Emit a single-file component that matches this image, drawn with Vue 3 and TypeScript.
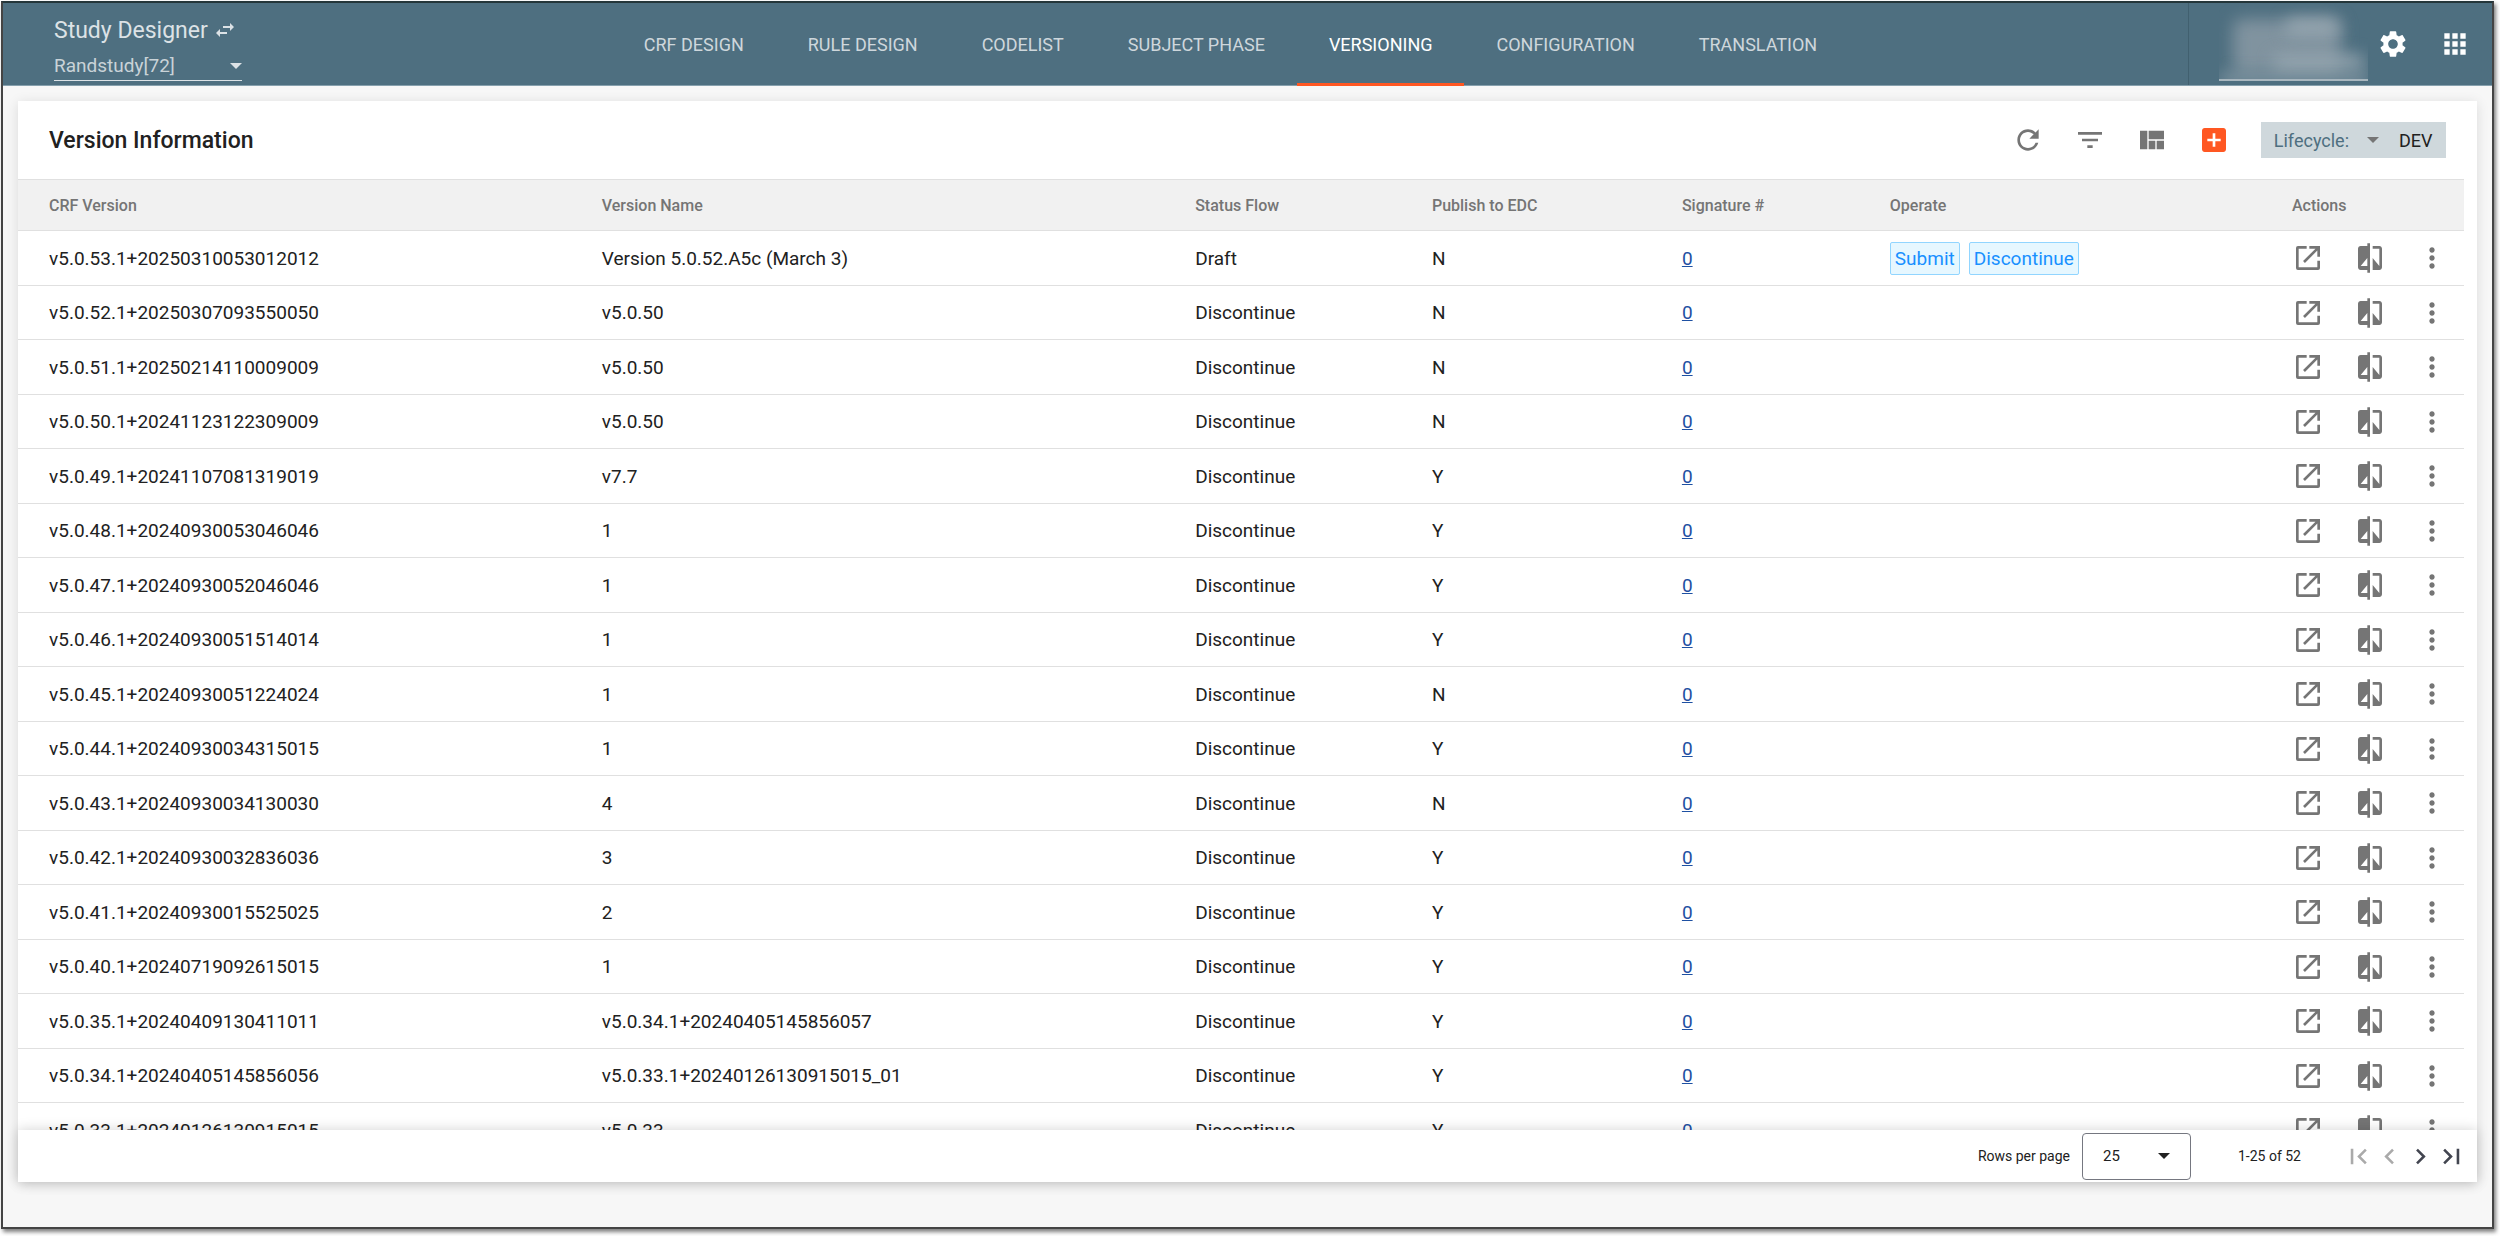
<script setup lang="ts">
import { ref } from 'vue'

interface VersionRow {
  version: string
  name: string
  status: string
  published: 'Y' | 'N'
  signatures: number
}

const tabs: string[] = [
  'CRF DESIGN',
  'RULE DESIGN',
  'CODELIST',
  'SUBJECT PHASE',
  'VERSIONING',
  'CONFIGURATION',
  'TRANSLATION',
]
const activeTab = ref('VERSIONING')

const source: [string, string, 'Y' | 'N'][] = [
  ['v5.0.53.1+20250310053012012', 'Version 5.0.52.A5c (March 3)', 'N'],
  ['v5.0.52.1+20250307093550050', 'v5.0.50', 'N'],
  ['v5.0.51.1+20250214110009009', 'v5.0.50', 'N'],
  ['v5.0.50.1+20241123122309009', 'v5.0.50', 'N'],
  ['v5.0.49.1+20241107081319019', 'v7.7', 'Y'],
  ['v5.0.48.1+20240930053046046', '1', 'Y'],
  ['v5.0.47.1+20240930052046046', '1', 'Y'],
  ['v5.0.46.1+20240930051514014', '1', 'Y'],
  ['v5.0.45.1+20240930051224024', '1', 'N'],
  ['v5.0.44.1+20240930034315015', '1', 'Y'],
  ['v5.0.43.1+20240930034130030', '4', 'N'],
  ['v5.0.42.1+20240930032836036', '3', 'Y'],
  ['v5.0.41.1+20240930015525025', '2', 'Y'],
  ['v5.0.40.1+20240719092615015', '1', 'Y'],
  ['v5.0.35.1+20240409130411011', 'v5.0.34.1+20240405145856057', 'Y'],
  ['v5.0.34.1+20240405145856056', 'v5.0.33.1+20240126130915015_01', 'Y'],
  ['v5.0.33.1+20240126130915015', 'v5.0.33', 'Y'],
]

const rows: VersionRow[] = source.map(([version, name, published], index) => ({
  version,
  name,
  published,
  status: index === 0 ? 'Draft' : 'Discontinue',
  signatures: 0,
}))
</script>

<template>
  <div class="frame">
    <header class="topbar">
      <div class="brand">
        <div class="brand-name">
          <span>Study Designer</span>
          <svg class="swap" viewBox="3 5 18 14" aria-hidden="true">
            <path d="M6.990 11 3 15l3.990 4v-3H14v-2H6.990v-3zM21 9l-3.990-4v3H10v2h7.010v3L21 9z" />
          </svg>
        </div>
        <div class="study">
          <select class="study-select" aria-label="Study">
            <option>Randstudy[72]</option>
          </select>
          <svg class="caret" viewBox="0 0 12 6" aria-hidden="true"><path d="M0 0h12L6 6z" /></svg>
        </div>
      </div>
      <nav class="tabs">
        <a
          v-for="tab in tabs"
          :key="tab"
          href="#"
          class="tab"
          :class="{ active: tab === activeTab }"
          @click.prevent="activeTab = tab"
          >{{ tab }}</a
        >
      </nav>
      <div class="account">
        <div class="user">
          <i class="smudge base"></i><i class="smudge one"></i><i class="smudge two"></i><i class="smudge three"></i>
        </div>
        <button class="bar-button" aria-label="Settings">
          <svg viewBox="0 0 24 24">
            <path
              d="M19.14 12.94c.04-.3.06-.61.06-.94 0-.32-.02-.64-.07-.94l2.03-1.58c.18-.14.23-.41.12-.61l-1.92-3.32c-.12-.22-.37-.29-.59-.22l-2.39.96c-.5-.38-1.03-.7-1.62-.94l-.36-2.54c-.04-.24-.24-.41-.48-.41h-3.84c-.24 0-.43.17-.47.41l-.36 2.54c-.59.24-1.13.57-1.62.94l-2.39-.96c-.22-.08-.47 0-.59.22L2.74 8.87c-.12.21-.08.47.12.61l2.03 1.58c-.05.3-.09.63-.09.94s.02.64.07.94l-2.03 1.58c-.18.14-.23.41-.12.61l1.92 3.32c.12.22.37.29.59.22l2.39-.96c.5.38 1.03.7 1.62.94l.36 2.54c.05.24.24.41.48.41h3.84c.24 0 .44-.17.47-.41l.36-2.54c.59-.24 1.13-.56 1.62-.94l2.39.96c.22.08.47 0 .59-.22l1.92-3.32c.12-.22.07-.47-.12-.61l-2.01-1.58zM12 15.6c-1.98 0-3.6-1.62-3.6-3.6s1.62-3.6 3.6-3.6 3.6 1.62 3.6 3.6-1.62 3.6-3.6 3.6z"
            />
          </svg>
        </button>
        <button class="bar-button" aria-label="Apps">
          <svg viewBox="0 0 24 24">
            <path
              d="M4 8h4V4H4v4zm6 12h4v-4h-4v4zm-6 0h4v-4H4v4zm0-6h4v-4H4v4zm6 0h4v-4h-4v4zm6-10v4h4V4h-4zm-6 4h4V4h-4v4zm6 6h4v-4h-4v4zm0 6h4v-4h-4v4z"
            />
          </svg>
        </button>
      </div>
    </header>

    <main class="content">
      <section class="card">
        <div class="card-head">
          <h1>Version Information</h1>
          <div class="tools">
            <button class="icon-button" aria-label="Refresh">
              <svg viewBox="0 0 24 24">
                <path
                  d="M17.65 6.35C16.2 4.9 14.21 4 12 4c-4.42 0-7.99 3.58-7.99 8s3.57 8 7.99 8c3.73 0 6.84-2.55 7.73-6h-2.08c-.82 2.33-3.04 4-5.65 4-3.31 0-6-2.69-6-6s2.69-6 6-6c1.66 0 3.14.69 4.22 1.78L13 11h7V4l-2.35 2.35z"
                />
              </svg>
            </button>
            <button class="icon-button" aria-label="Filter">
              <svg viewBox="0 0 24 24"><path d="M10 18h4v-2h-4v2zM3 6v2h18V6H3zm3 7h12v-2H6v2z" /></svg>
            </button>
            <button class="icon-button" aria-label="Columns">
              <svg viewBox="0 0 24 24">
                <path d="M3 5v14h5.500V5zM9.500 5v6.500H21V5zM9.500 12.500V19h5v-6.500zM15.500 12.500V19H21v-6.500z" />
              </svg>
            </button>
            <button class="icon-button add" aria-label="Add version">
              <svg viewBox="0 0 24 24">
                <path
                  d="M19 3H5c-1.110 0-2 .9-2 2v14c0 1.100.89 2 2 2h14c1.100 0 2-.9 2-2V5c0-1.100-.9-2-2-2zm-2 10h-4v4h-2v-4H7v-2h4V7h2v4h4v2z"
                />
              </svg>
            </button>
            <div class="lifecycle">
              <label for="lifecycle">Lifecycle:</label>
              <svg class="caret" viewBox="0 0 12 6" aria-hidden="true"><path d="M0 0h12L6 6z" /></svg>
              <select id="lifecycle">
                <option>DEV</option>
              </select>
            </div>
          </div>
        </div>

        <div class="table-scroll">
          <table>
            <colgroup>
              <col class="c-version" />
              <col class="c-name" />
              <col class="c-status" />
              <col class="c-publish" />
              <col class="c-sign" />
              <col class="c-operate" />
              <col class="c-actions" />
            </colgroup>
            <thead>
              <tr>
                <th>CRF Version</th>
                <th>Version Name</th>
                <th>Status Flow</th>
                <th>Publish to EDC</th>
                <th>Signature #</th>
                <th>Operate</th>
                <th>Actions</th>
              </tr>
            </thead>
            <tbody>
              <tr v-for="row in rows" :key="row.version">
                <td>{{ row.version }}</td>
                <td>{{ row.name }}</td>
                <td>{{ row.status }}</td>
                <td>{{ row.published }}</td>
                <td><a href="#" class="sign">{{ row.signatures }}</a></td>
                <td>
                  <div v-if="row.status === 'Draft'" class="operate">
                    <button class="chip">Submit</button>
                    <button class="chip">Discontinue</button>
                  </div>
                </td>
                <td>
                  <div class="actions">
                    <button class="icon-button" aria-label="Open">
                      <svg viewBox="0 0 24 24">
                        <path
                          d="M4.500 3H11v2H5v14h14v-5h2v5.500a1.500 1.500 0 0 1-1.500 1.500h-15A1.500 1.500 0 0 1 3 19.500v-15A1.500 1.500 0 0 1 4.500 3zM13 3h8v8h-2V6.400l-9.300 9.300-1.400-1.400L17.600 5H13z"
                        />
                      </svg>
                    </button>
                    <button class="icon-button" aria-label="Compare">
                      <svg viewBox="0 0 24 24">
                        <path
                          d="M10 3H5c-1.100 0-2 .9-2 2v14c0 1.100.9 2 2 2h5v2h2V1h-2v2zm0 15H5l5-6v6zm9-15h-5v2h5v13l-5-6v9h5c1.100 0 2-.9 2-2V5c0-1.100-.9-2-2-2z"
                        />
                      </svg>
                    </button>
                    <button class="icon-button" aria-label="More">
                      <svg viewBox="0 0 24 24">
                        <path
                          d="M12 8c1.100 0 2-.9 2-2s-.9-2-2-2-2 .9-2 2 .9 2 2 2zm0 2c-1.100 0-2 .9-2 2s.9 2 2 2 2-.9 2-2-.9-2-2-2zm0 6c-1.100 0-2 .9-2 2s.9 2 2 2 2-.9 2-2-.9-2-2-2z"
                        />
                      </svg>
                    </button>
                  </div>
                </td>
              </tr>
            </tbody>
          </table>
        </div>

        <footer class="pager">
          <label for="page-size">Rows per page</label>
          <div class="page-size">
            <select id="page-size">
              <option>25</option>
            </select>
            <svg class="caret" viewBox="0 0 12 6" aria-hidden="true"><path d="M0 0h12L6 6z" /></svg>
          </div>
          <span class="range">1-25 of 52</span>
          <div class="pages">
            <button disabled aria-label="First page">
              <svg viewBox="0 0 24 24"><path d="M18.410 16.590 13.820 12l4.590-4.590L17 6l-6 6 6 6zM6 6h2v12H6z" /></svg>
            </button>
            <button disabled aria-label="Previous page">
              <svg viewBox="0 0 24 24"><path d="M15.410 7.410 14 6l-6 6 6 6 1.410-1.410L10.830 12z" /></svg>
            </button>
            <button aria-label="Next page">
              <svg viewBox="0 0 24 24"><path d="M10 6 8.590 7.410 13.170 12l-4.580 4.590L10 18l6-6z" /></svg>
            </button>
            <button aria-label="Last page">
              <svg viewBox="0 0 24 24"><path d="M5.590 7.410 10.180 12l-4.590 4.590L7 18l6-6-6-6zM16 6h2v12h-2z" /></svg>
            </button>
          </div>
        </footer>
      </section>
    </main>
  </div>
</template>

<style>
body {
  margin: 0;
  background: #fff;
}
</style>

<style scoped>
* {
  box-sizing: border-box;
}

.frame {
  display: flex;
  flex-direction: column;
  height: calc(100vh - 8px);
  margin: 1px 6px 7px 1px;
  border: 2px solid #444;
  border-top-color: #24363a;
  background: #f7f7f7;
  box-shadow: 2px 3px 4px rgba(0, 0, 0, 0.5);
  font-family: Roboto, 'Liberation Sans', sans-serif;
  font-size: 18px;
  color: #212121;
}

button,
select {
  margin: 0;
  padding: 0;
  border: 0;
  background: none;
  font: inherit;
  color: inherit;
  appearance: none;
}

svg {
  display: block;
  fill: currentColor;
}

.topbar {
  display: flex;
  flex: none;
  height: 83px;
  border-bottom: 1px solid #86a0ad;
  background: #4e6f80;
  color: #fff;
}

.brand {
  width: 270px;
  padding: 12px 0 0 51px;
  color: #dce2e6;
}

.brand-name {
  display: flex;
  align-items: center;
  gap: 8px;
  height: 30px;
  font-size: 23px;
}

.swap {
  width: 18px;
  height: 14px;
}

.study {
  display: flex;
  align-items: center;
  width: 188px;
  height: 36px;
  padding-top: 6px;
  border-bottom: 1px solid #dce2e6;
}

.study-select {
  flex: 1;
  font-size: 19px;
  color: #c9d3d8;
}

.caret {
  width: 12px;
  height: 6px;
}

.tabs {
  display: flex;
  flex: 1;
  justify-content: center;
}

.tab {
  display: flex;
  align-items: center;
  padding: 3px 32px 0;
  margin-bottom: -1px;
  border-bottom: 3px solid transparent;
  color: #ced7dc;
  text-decoration: none;
}

.tab.active {
  border-color: #ff5722;
  color: #fff;
}

.account {
  display: flex;
  align-items: center;
  width: 304px;
  padding-left: 30px;
  border-left: 1px solid #41606f;
}

.user {
  position: relative;
  align-self: flex-start;
  width: 149px;
  height: 78px;
  overflow: hidden;
  border-bottom: 2px solid #a9b7bf;
}

.smudge {
  position: absolute;
  border-radius: 8px;
  background: #96a6b0;
  filter: blur(8px);
}

.base {
  left: 14px;
  top: 16px;
  width: 108px;
  height: 54px;
  background: #80939f;
}

.one {
  left: 66px;
  top: 16px;
  width: 54px;
  height: 16px;
}

.two {
  left: 54px;
  top: 52px;
  width: 92px;
  height: 14px;
}

.three {
  left: 0;
  top: 72px;
  width: 149px;
  height: 8px;
}

.bar-button {
  width: 50px;
}

.bar-button + .bar-button {
  margin-left: 12px;
}

.bar-button svg {
  width: 32px;
  height: 32px;
  margin: 0 auto;
}

.content {
  display: flex;
  flex: 1;
  min-height: 0;
  padding: 15px 15px 45px;
}

.card {
  display: flex;
  flex: 1;
  flex-direction: column;
  min-width: 0;
  background: #fff;
  box-shadow: 0 2px 12px rgba(0, 0, 0, 0.12);
}

.card-head {
  display: flex;
  flex: none;
  align-items: center;
  justify-content: space-between;
  height: 78px;
  padding: 0 31px;
}

h1 {
  margin: 0;
  font-size: 23px;
  font-weight: 500;
}

.tools {
  display: flex;
  align-items: center;
}

.icon-button {
  width: 62px;
  color: #757575;
}

.icon-button svg {
  width: 32px;
  height: 32px;
  margin: 0 auto;
}

.icon-button.add {
  color: #ff5722;
}

.lifecycle {
  display: flex;
  align-items: center;
  height: 36px;
  margin-left: 16px;
  padding: 0 13px;
  background: #cfd8dc;
}

.lifecycle label {
  color: #4e6f80;
}

.lifecycle .caret {
  margin: 0 20px 0 18px;
  color: #757575;
}

.table-scroll {
  flex: 1;
  min-height: 0;
  padding-right: 13px;
  overflow: hidden;
}

table {
  width: 100%;
  border-collapse: separate;
  border-spacing: 0;
  table-layout: fixed;
}

.c-version {
  width: 22.6%;
}
.c-name {
  width: 24.26%;
}
.c-status {
  width: 9.68%;
}
.c-publish {
  width: 10.22%;
}
.c-sign {
  width: 8.5%;
}
.c-operate {
  width: 16.44%;
}
.c-actions {
  width: 8.3%;
}

th,
td {
  padding: 0 0 0 31px;
  border-bottom: 1px solid #e0e0e0;
  text-align: left;
  white-space: nowrap;
}

th {
  height: 52px;
  border-top: 1px solid #e0e0e0;
  background: #f1f1f1;
  font-size: 16px;
  font-weight: 500;
  color: #757575;
}

td {
  height: 54px;
  font-size: 19px;
}

tr:nth-child(odd) td {
  height: 55px;
}

.sign {
  color: #1e50a2;
}

.operate {
  display: flex;
  gap: 9px;
}

.chip {
  height: 33px;
  padding: 0 4px;
  border: 1px solid #91d5ff;
  border-radius: 2px;
  background: #e6f7ff;
  color: #1890ff;
}

.actions {
  display: flex;
  margin-left: -15px;
}

.pager {
  display: flex;
  flex: none;
  align-items: center;
  height: 52px;
  padding-right: 10px;
  background: #fff;
  box-shadow: 0 0 12px rgba(0, 0, 0, 0.18);
  font-size: 14px;
}

.pager > label {
  margin-left: auto;
}

.page-size {
  display: flex;
  align-items: center;
  width: 109px;
  height: 47px;
  margin-left: 12px;
  padding: 0 20px;
  border: 1px solid #757780;
  border-radius: 4px;
}

.page-size select {
  flex: 1;
  font-size: 15px;
}

.range {
  margin: 0 42px 0 47px;
}

.pages {
  display: flex;
}

.pages button {
  width: 31px;
  color: #424550;
}

.pages button:disabled {
  color: #aaa;
}

.pages svg {
  width: 31px;
  height: 31px;
}
</style>
